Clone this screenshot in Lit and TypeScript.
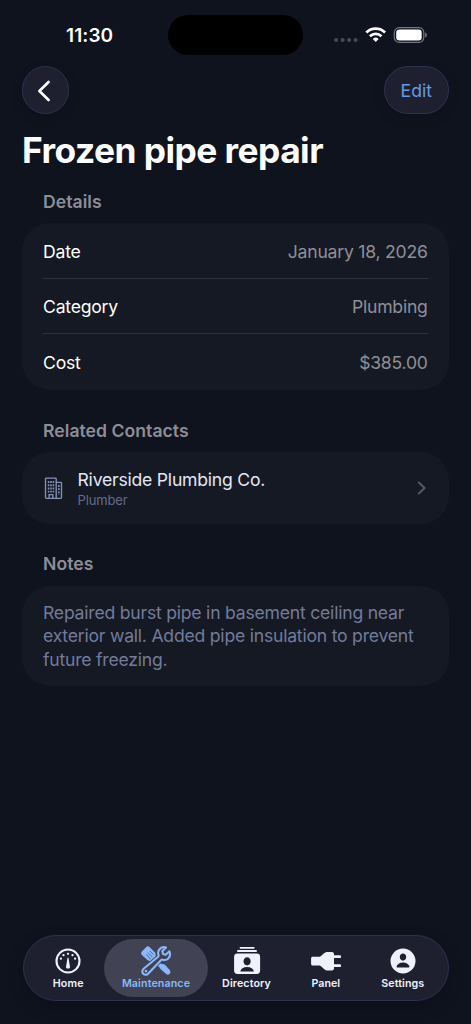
import { LitElement, html, svg, css } from "lit";
import { customElement } from "lit/decorators.js";

interface Row { label: string; value: string; }
interface Tab { label: string; cls: string; icon: unknown; }

const rows: Row[] = [
  { label: "Date", value: "January 18, 2026" },
  { label: "Category", value: "Plumbing" },
  { label: "Cost", value: "$385.00" },
];

const homeIcon = svg`<svg width="32" height="32" viewBox="0 0 32 32" fill="none">
  <circle cx="16" cy="16" r="11.500" stroke="currentColor" stroke-width="2.100"/>
  <g fill="currentColor"><circle cx="8.900" cy="13.700" r="1.150"/><circle cx="11.500" cy="10.200" r="1.150"/><circle cx="16" cy="8.800" r="1.150"/><circle cx="20.500" cy="10.200" r="1.150"/><circle cx="23.100" cy="13.700" r="1.150"/>
  <path d="M16 12.600c.35 0 .5.3.55.7l1.350 7.900a1.950 1.950 0 1 1-3.800 0l1.350-7.900c.05-.4.2-.7.55-.7z"/></g></svg>`;

const toolsIcon = svg`<svg width="32" height="32" viewBox="0 0 32 32" fill="none">
  <path d="M15 15.500l7.500 7.500" stroke="currentColor" stroke-width="3.600"/>
  <path d="M21 19.300l3.600.9 4.600 5.200c.9 1 .9 2.200.1 3s-2 .8-3-.1l-5.200-4.600-.9-3.600z" fill="currentColor" stroke="currentColor" stroke-width="1.200" stroke-linejoin="round"/>
  <path d="M1.900 6.400l4.600-4.600c.8-.8 1.900-.8 2.700 0l5.100 5c.8.8 1.300 1.500 1.300 2.600v1.700c0 .8.300 1.400.8 1.900l1.700 1.700-3.600 3.600-1.900-1.800c-.4-.4-.9-.6-1.500-.6H9.500c-1 0-1.700-.4-2.400-1.100L1.900 9.900c-1-1-1-2.500 0-3.500z" fill="currentColor"/>
  <path d="M6.200 9.600l4.600 4.600M8.100 7.800l4.600 4.600M10 6l3.500 3.500" stroke="#414354" stroke-width=".7"/>
  <path d="M29.400 6.300l-3.700 3.500-2.700-.7-.7-2.800L26 2.600c-2.600-.9-5.200-.1-6.700 1.900-1.200 1.600-1.500 3.600-.8 5.600.2.6 0 1.200-.4 1.600L3.600 23.800a3.350 3.350 0 1 0 4.700 4.700l12.900-13.400c.4-.4 1-.6 1.600-.4 2 .6 4.100.2 5.500-1.200 1.900-1.900 2.100-4.600 1.100-7.200z" stroke="#414354" stroke-width="3.600"/>
  <path d="M29.400 6.300l-3.700 3.500-2.700-.7-.7-2.800L26 2.600c-2.600-.9-5.200-.1-6.700 1.900-1.200 1.600-1.500 3.600-.8 5.600.2.6 0 1.200-.4 1.600L3.600 23.800a3.350 3.350 0 1 0 4.700 4.700l12.900-13.400c.4-.4 1-.6 1.600-.4 2 .6 4.100.2 5.500-1.200 1.900-1.900 2.100-4.600 1.100-7.200z" fill="#414354" stroke="currentColor" stroke-width="2.100" stroke-linejoin="round"/>
  <circle cx="6" cy="26.100" r="1.300" fill="currentColor"/></svg>`;

const directoryIcon = svg`<svg width="32" height="32" viewBox="0 0 32 32" fill="currentColor">
  <rect x="8.600" y="2" width="15" height="1.700" rx=".8"/><rect x="6" y="5" width="20" height="2" rx=".9"/>
  <path fill-rule="evenodd" d="M6.500 8.500h19.200a3.400 3.400 0 0 1 3.400 3.400v13.700a3.400 3.400 0 0 1-3.400 3.400H6.500a3.400 3.400 0 0 1-3.400-3.400V11.900a3.400 3.400 0 0 1 3.400-3.400zM16.100 12.300c-2 0-3.600 1.700-3.600 4s1.600 4.200 3.600 4.200 3.600-1.900 3.600-4.200-1.600-4-3.600-4zM9.300 26.400h13.600c-.5-2.700-3.100-4.300-6.800-4.300s-6.300 1.600-6.800 4.300z"/></svg>`;

const panelIcon = svg`<svg width="32" height="32" viewBox="0 0 32 32" fill="currentColor">
  <path d="M1.100 13.200c0-.9.6-1.500 1.500-1.500h6.800c.6 0 1.100-.2 1.600-.6l3.300-3c1-.9 2-1.200 3.300-1.200h4.200c1.400 0 2.200.8 2.200 2.100v1.300h5.700c.9 0 1.400.6 1.400 1.400s-.5 1.400-1.400 1.400H24v6.200h5.700c.9 0 1.400.6 1.400 1.400s-.5 1.400-1.400 1.400H24v1.200c0 1.300-.8 2.100-2.200 2.100h-4.200c-1.300 0-2.300-.3-3.300-1.200l-3.300-3c-.5-.4-1-.6-1.600-.6H2.600c-.9 0-1.500-.6-1.500-1.500z"/></svg>`;

const settingsIcon = svg`<svg width="32" height="32" viewBox="0 0 32 32" fill="currentColor">
  <path fill-rule="evenodd" d="M16 3.500a12.500 12.500 0 1 0 0 25 12.500 12.500 0 0 0 0-25zM16 8.600c-1.800 0-3.200 1.500-3.200 3.500s1.400 3.600 3.200 3.600 3.200-1.600 3.200-3.600-1.400-3.500-3.200-3.500zM10.300 22.500h11.400c.6 0 .9-.4.8-.9-.6-2.400-3.100-4.200-6.500-4.200s-5.900 1.800-6.500 4.200c-.1.5.2.9.8.9z"/></svg>`;

const tabs: Tab[] = [
  { label: "Home", cls: "t-home", icon: homeIcon },
  { label: "Maintenance", cls: "t-maint active", icon: toolsIcon },
  { label: "Directory", cls: "t-dir", icon: directoryIcon },
  { label: "Panel", cls: "t-panel", icon: panelIcon },
  { label: "Settings", cls: "t-set", icon: settingsIcon },
];

@customElement("app-root")
export class AppRoot extends LitElement {
  static styles = css`
    :host { display: flex; flex-direction: column; box-sizing: border-box; width: 100%; height: 1024px; overflow: hidden;
      background: #0f131e; color: #fff; font-family: Inter, sans-serif; font-size: 17.6px; line-height: 24px; white-space: nowrap; }
    * { box-sizing: border-box; }
    svg { display: block; flex: none; }
    .status { display: grid; grid-template-columns: 168.3px 134.5px 1fr; height: 66px; padding-top: 15px; flex: none; }
    .time { padding-left: 66px; font-size: 19px; font-weight: 600; line-height: 41px; letter-spacing: .1px; }
    .island { height: 39.5px; border-radius: 20px; background: #000; }
    .signals { display: flex; align-items: flex-start; padding: 11px 0 0 30.200px; }
    .top { display: flex; justify-content: space-between; padding: 0 22px; height: 48px; flex: none; }
    .glass { height: 48px; border-radius: 24px; background: #1e2030; border: 1px solid #2d3250; display: flex; align-items: center; justify-content: center; box-shadow: 0 4px 14px rgba(0,0,0,.12); }
    .back { width: 47px; padding: 1px 3px 0 0; }
    .edit { width: 65.500px; padding-top: 2px; color: #699ae0; }
    h1 { margin: 15px 22px 0; font-size: 35.300px; line-height: 44px; font-weight: 700; letter-spacing: -.52px; flex: none; }
    h2 { margin: 0 43px; font-size: 17.600px; line-height: 24px; font-weight: 600; color: #8d8d97; letter-spacing: .04px; }
    .h-details { margin-top: 17.200px; }
    .card { margin: 9.100px 22px 0; border-radius: 28px; background: #151923; padding: 0 21px; letter-spacing: -.22px; }
    .row { display: flex; justify-content: space-between; align-items: center; height: 55.600px; padding-top: 2px; border-bottom: 1px solid #30333d; }
    .row:last-child { border-bottom: 0; }
    .value { color: #8f8f99; margin-right: .3px; }
    .h-related { margin-top: 29px; }
    .contact { display: flex; align-items: center; height: 71.500px; }
    .who { flex: 1; padding: 1.500px 0 0 14.500px; }
    .name { color: #e3e7f5; line-height: 23px; }
    .role { color: #646b8c; font-size: 13px; line-height: 18px; letter-spacing: -.15px; }
    .h-notes { margin-top: 28.800px; }
    .notes { height: 100.500px; padding-top: 15.300px; color: #737b9c; line-height: 23.600px; letter-spacing: -.22px; }
    .tabbar { display: flex; align-items: center; margin: auto 22.500px 23px; height: 66px; border-radius: 33px; background: #1e2030; border: 1px solid #2d3250; padding: 0 3px; box-shadow: 0 6px 18px rgba(0,0,0,.2); flex: none; }
    .tab { display: flex; flex-direction: column; align-items: center; height: 58px; padding-top: 6px; color: #eff2fe; font-size: 10.700px; line-height: 14px; font-weight: 600; letter-spacing: .1px; border-radius: 29px; }
    .t-home { width: 77.500px; padding-left: 5px; }
    .t-home span { letter-spacing: .2px; padding-left: 1px; }
    .t-maint { width: 104px; }
    .t-dir { width: 77px; }
    .t-panel { width: 82px; }
    .t-panel span { letter-spacing: 0; margin-right: .5px; }
    .t-set { width: 71.500px; }
    .active { background: #414354; color: #8ab8fa; }
  `;

  render() {
    return html`
      <div class="status">
        <div class="time">11:30</div><div class="island"></div>
        <div class="signals">
          <svg width="96" height="18" viewBox="0 0 96 18" fill="none">
            <g fill="#464954"><circle cx="3.100" cy="14" r="2.100"/><circle cx="9.600" cy="14" r="2.100"/><circle cx="16.100" cy="14" r="2.100"/><circle cx="22.600" cy="14" r="2.100"/></g>
            <g stroke="#fff" stroke-width="2.700"><path d="M33.300 6.500a13.400 13.400 0 0 1 18.800 0"/><path d="M36.900 10.200a8.300 8.300 0 0 1 11.600 0"/></g>
            <path d="M42.700 15.900l-2.900-2.900a4.200 4.200 0 0 1 5.800 0z" fill="#fff"/>
            <rect x="61.300" y="1.700" width="29.500" height="14.600" rx="4.800" stroke="#747780" stroke-width="1.200"/>
            <rect x="63.200" y="3.600" width="25.500" height="10.800" rx="3.200" fill="#fff"/>
            <path d="M92.200 6.500c1.200.4 1.700 1.400 1.700 2.500s-.5 2.100-1.700 2.500z" fill="#747780"/>
          </svg>
        </div>
      </div>
      <div class="top">
        <div class="glass back"><svg width="16" height="24" viewBox="0 0 16 24" fill="none"><path d="M12.600 3L3.400 12l9.200 9" stroke="#fff" stroke-width="2.600" stroke-linecap="round" stroke-linejoin="round"/></svg></div>
        <div class="glass edit">Edit</div>
      </div>
      <h1>Frozen pipe repair</h1>
      <h2 class="h-details">Details</h2>
      <div class="card">
        ${rows.map((r) => html`<div class="row"><span>${r.label}</span><span class="value">${r.value}</span></div>`)}
      </div>
      <h2 class="h-related">Related Contacts</h2>
      <div class="card contact">
        <svg width="20" height="24" viewBox="0 0 20 24" fill="none" stroke="#8491b6">
          <path d="M13.200 22.300H3.300a.8.800 0 0 1-.8-.8V2.900c0-.5.300-.8.800-.8h9.100c.5 0 .8.300.8.800v19.400zM13.200 6.300h4.500c.5 0 .8.300.8.800v14.400c0 .5-.3.800-.8.800h-4.500M6.100 22v-3.400h3.700V22" stroke-width="1.350"/>
          <path d="M5.600 5.100v11.500M8 5.100v11.500M10.400 5.100v11.500" stroke-width="1.600" stroke-dasharray="1.900 1.300"/><path d="M15.800 9v10" stroke-width="1.700" stroke-dasharray="1.900 1.300"/>
        </svg>
        <div class="who"><div class="name">Riverside Plumbing Co.</div><div class="role">Plumber</div></div>
        <svg width="12" height="18" viewBox="0 0 12 18" fill="none"><path d="M2.800 3.500L8.600 9l-5.800 5.500" stroke="#565963" stroke-width="2" stroke-linecap="round" stroke-linejoin="round"/></svg>
      </div>
      <h2 class="h-notes">Notes</h2>
      <div class="card notes">
        <div>Repaired burst pipe in basement ceiling near</div>
        <div>exterior wall. Added pipe insulation to prevent</div>
        <div>future freezing.</div>
      </div>
      <nav class="tabbar">${tabs.map((t) => html`<div class="tab ${t.cls}">${t.icon}<span>${t.label}</span></div>`)}</nav>
    `;
  }
}
